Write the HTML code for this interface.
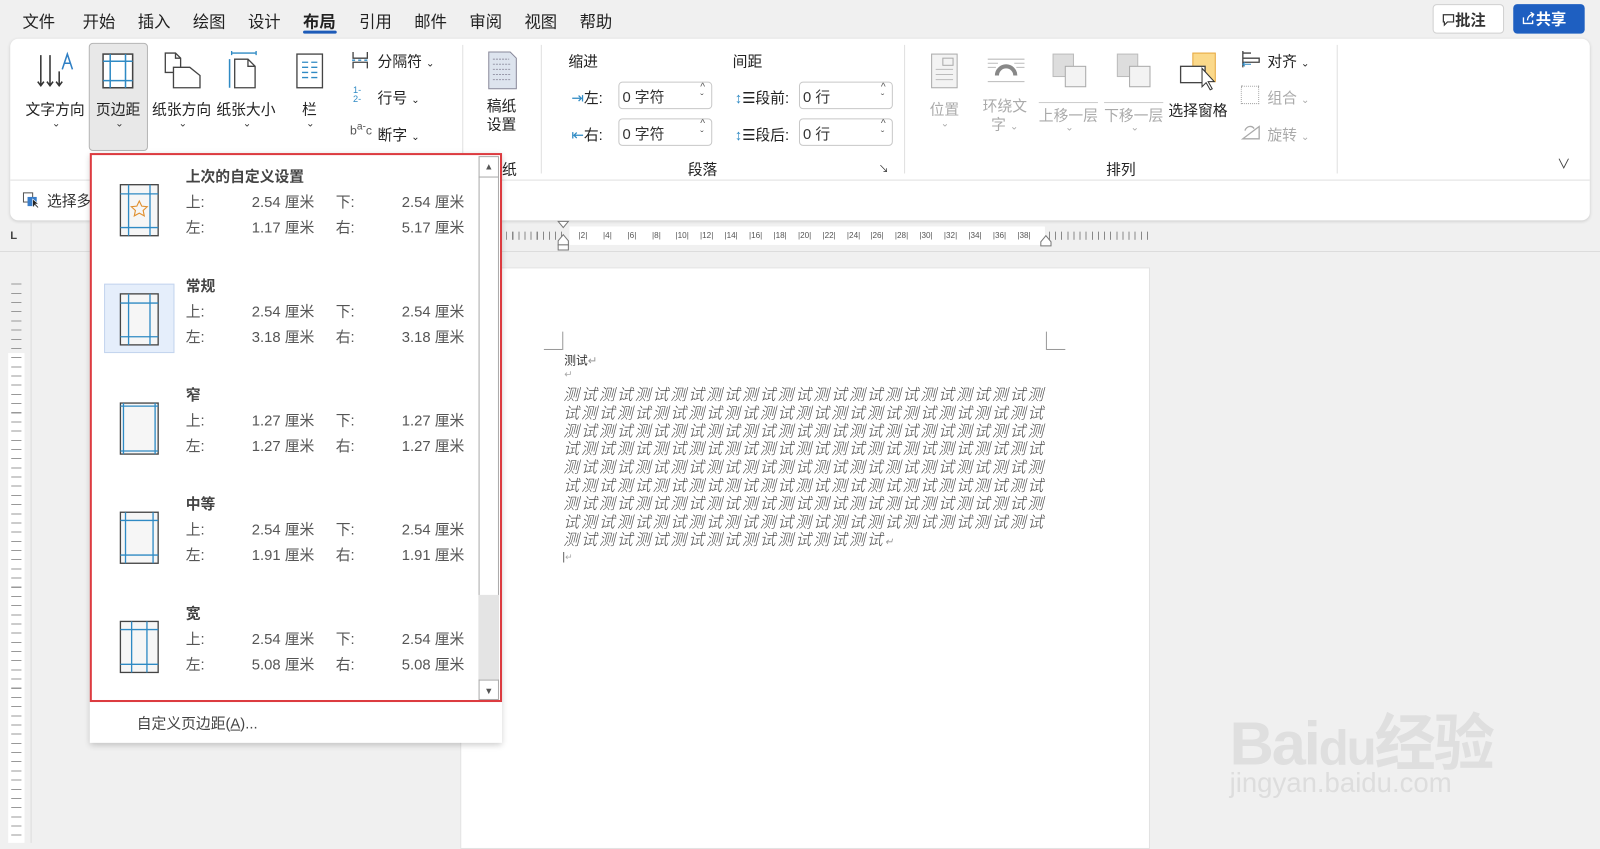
<!DOCTYPE html>
<html><head><meta charset="utf-8">
<style>
*{margin:0;padding:0;box-sizing:border-box}
html,body{width:1600px;height:843px;overflow:hidden;background:#f0f0f0}
body{font-family:"Liberation Sans","Noto Sans CJK SC",sans-serif;color:#333}
#w{position:absolute;left:0;top:0;width:1568px;height:826px;transform:scale(1.0204);transform-origin:0 0}
.a{position:absolute;white-space:nowrap}
.tab{position:absolute;top:8px;font-size:16px;color:#222}
.rl{font-size:14.5px;color:#222}
.g{color:#aaa}
.sp{position:absolute;width:92px;height:27px;border:1px solid #c8c8c8;border-radius:4px;background:#fff;font-size:14.5px;padding:3px 0 0 3px}
.sp i{position:absolute;right:6px;top:-1px;font-style:normal;font-size:10px;color:#555;line-height:11px}
.it{position:absolute;left:0;width:380px;height:100px}
.it .t{position:absolute;left:94px;top:0;font-size:14.5px;font-weight:bold;color:#444}
.it .r{position:absolute;font-size:14.5px;color:#555}
.doc{font-family:"Noto Sans CJK SC",sans-serif;font-style:italic;font-weight:300;font-size:15.5px;letter-spacing:2px;color:#4a4a4a;position:absolute;left:552px;line-height:17.8px}
.rn{position:absolute;top:226px;font-size:8px;color:#555}
</style></head><body><div id="w">

<div class="tab" style="left:22px">文件</div>
<div class="tab" style="left:81px">开始</div>
<div class="tab" style="left:135px">插入</div>
<div class="tab" style="left:189px">绘图</div>
<div class="tab" style="left:243px">设计</div>
<div class="tab" style="left:297px;font-weight:bold">布局</div>
<div class="a" style="left:297px;top:30px;width:33px;height:3px;background:#1d5bb8;border-radius:2px"></div>
<div class="tab" style="left:352px">引用</div>
<div class="tab" style="left:406px">邮件</div>
<div class="tab" style="left:460px">审阅</div>
<div class="tab" style="left:514px">视图</div>
<div class="tab" style="left:568px">帮助</div>

<div class="a" style="left:1404px;top:4px;width:70px;height:29px;background:#fff;border:1px solid #d0d0d0;border-radius:4px;font-size:15px;font-weight:bold;padding:4px 0 0 8px">
<svg width="13" height="13" style="vertical-align:-1px"><path d="M1.5 1.5h10v7h-6l-3 3v-3h-1z" fill="none" stroke="#333" stroke-width="1.2"/></svg>批注</div>
<div class="a" style="left:1483px;top:4px;width:70px;height:29px;background:#1e5fc1;border-radius:4px;font-size:15px;font-weight:bold;color:#fff;padding:4px 0 0 8px">
<svg width="14" height="14" style="vertical-align:-1px"><path d="M2 6v6h9V9M6 9c0-4 3-6 6-6M9 1l3 2-2 3" fill="none" stroke="#fff" stroke-width="1.3"/></svg>共享</div>

<div class="a" style="left:10px;top:38px;width:1548px;height:178px;background:#fff;border-radius:8px;box-shadow:0 1px 3px rgba(0,0,0,.15)"></div>
<div class="a" style="left:10px;top:176px;width:1548px;height:1px;background:#e0e0e0"></div>
<div class="a" style="left:22px;top:186px;font-size:14.5px"><svg width="20" height="18" style="vertical-align:-3px"><rect x="1" y="2" width="9" height="9" fill="none" stroke="#555"/><rect x="5" y="6" width="9" height="9" fill="#3a7dc9"/><path d="M10 8l0 9 2-3 3 3 1-1-3-3h3z" fill="#222" stroke="#fff" stroke-width=".6"/></svg> 选择多</div>

<div class="a" style="left:87px;top:42px;width:58px;height:106px;background:#e8e8e8;border:1px solid #b5b5b5;border-radius:4px"></div>
<svg class="a" style="left:36px;top:50px" width="38" height="40"><path d="M4 4v30M13 4v30M22 20v14M1 30l3 4 3-4M10 30l3 4 3-4M19 30l3 4 3-4" fill="none" stroke="#333" stroke-width="1.5"/><path d="M25 18l5-15 5 15M27 12h6" fill="none" stroke="#2f7fc4" stroke-width="1.5"/></svg>
<div class="a rl" style="left:25px;top:96px">文字方向</div><div class="a" style="left:51px;top:116px;font-size:10px">⌄</div>
<svg class="a" style="left:100px;top:52px" width="32" height="36"><rect x="1" y="1" width="29" height="33" fill="#fff" stroke="#444" stroke-width="1.5"/><path d="M8 1v33M23 1v33M1 8h29M1 27h29" stroke="#2f8ac4" stroke-width="1.5"/></svg>
<div class="a rl" style="left:94px;top:96px">页边距</div><div class="a" style="left:113px;top:116px;font-size:10px">⌄</div>
<svg class="a" style="left:160px;top:50px" width="40" height="38"><path d="M2 2h10l5 5v14H2z M12 2v5h5" fill="none" stroke="#444" stroke-width="1.3"/><path d="M10 16h16l10 8v12H10z" fill="#fff" stroke="#444" stroke-width="1.3"/></svg>
<div class="a rl" style="left:149px;top:96px">纸张方向</div><div class="a" style="left:175px;top:116px;font-size:10px">⌄</div>
<svg class="a" style="left:222px;top:50px" width="34" height="38"><path d="M5 2h24M5 0v4M29 0v4" stroke="#2f8ac4" stroke-width="1.3"/><path d="M3 8v28" stroke="#2f8ac4" stroke-width="1.5"/><path d="M8 8h13l7 7v21H8z M21 8v7h7" fill="none" stroke="#444" stroke-width="1.3"/></svg>
<div class="a rl" style="left:212px;top:96px">纸张大小</div><div class="a" style="left:238px;top:116px;font-size:10px">⌄</div>
<svg class="a" style="left:290px;top:52px" width="28" height="36"><rect x="1" y="1" width="25" height="33" fill="#fff" stroke="#444" stroke-width="1.3"/><path d="M6 9h6M15 9h6M6 14h6M15 14h6M6 19h6M15 19h6M6 24h6M15 24h6" stroke="#2f8ac4" stroke-width="1.3"/></svg>
<div class="a rl" style="left:296px;top:96px">栏</div><div class="a" style="left:300px;top:116px;font-size:10px">⌄</div>

<svg class="a" style="left:344px;top:50px" width="18" height="18"><path d="M2 1v6h14V1M2 17v-6h14v6" fill="none" stroke="#444" stroke-width="1.3"/><path d="M1 9h3M7 9h3M13 9h3" stroke="#2f8ac4" stroke-width="1.3"/></svg>
<div class="a rl" style="left:370px;top:49px">分隔符 <span style="font-size:10px">⌄</span></div>
<div class="a" style="left:346px;top:84px;font-size:9px;line-height:9px;color:#2f8ac4">1-<br>2-</div>
<div class="a rl" style="left:370px;top:85px">行号 <span style="font-size:10px">⌄</span></div>
<div class="a" style="left:343px;top:119px;font-size:12px;color:#555">b<span style="vertical-align:5px;font-size:10px">a-</span>c</div>
<div class="a rl" style="left:370px;top:121px">断字 <span style="font-size:10px">⌄</span></div>
<div class="a" style="left:453px;top:44px;width:1px;height:126px;background:#e0e0e0"></div>

<svg class="a" style="left:478px;top:50px" width="30" height="38"><path d="M1 1h21l6 6v30H1z" fill="#dde4ee" stroke="#889" stroke-width="1"/><path d="M5 8h16M5 13h18M5 18h18M5 23h18M5 28h18" stroke="#99a" stroke-dasharray="2 1"/></svg>
<div class="a rl" style="left:477px;top:96px;line-height:18px">稿纸<br>设置</div>
<div class="a rl" style="left:492px;top:155px">纸</div>
<div class="a" style="left:530px;top:44px;width:1px;height:126px;background:#e0e0e0"></div>

<div class="a rl" style="left:557px;top:49px">缩进</div>
<div class="a rl" style="left:718px;top:49px">间距</div>
<div class="a rl" style="left:560px;top:85px"><span style="color:#2f8ac4">⇥</span>左:</div>
<div class="a rl" style="left:560px;top:121px"><span style="color:#2f8ac4">⇤</span>右:</div>
<div class="sp" style="left:606px;top:80px">0 字符<i>^<br>ˇ</i></div>
<div class="sp" style="left:606px;top:116px">0 字符<i>^<br>ˇ</i></div>
<div class="a rl" style="left:720px;top:85px"><span style="color:#2f8ac4">↕</span>☰段前:</div>
<div class="a rl" style="left:720px;top:121px"><span style="color:#2f8ac4">↕</span>☰段后:</div>
<div class="sp" style="left:783px;top:80px">0 行<i>^<br>ˇ</i></div>
<div class="sp" style="left:783px;top:116px">0 行<i>^<br>ˇ</i></div>
<div class="a rl" style="left:674px;top:155px">段落</div>
<div class="a" style="left:861px;top:157px;font-size:10px">↘</div>
<div class="a" style="left:886px;top:44px;width:1px;height:126px;background:#e0e0e0"></div>

<svg class="a" style="left:912px;top:52px" width="28" height="36"><rect x="1" y="1" width="25" height="33" fill="#f3f3f3" stroke="#aaa"/><rect x="12" y="5" width="10" height="7" fill="none" stroke="#aaa"/><path d="M5 16h17M5 21h17M5 26h17" stroke="#bbb"/></svg>
<div class="a rl g" style="left:911px;top:96px">位置</div><div class="a g" style="left:922px;top:116px;font-size:10px">⌄</div>
<svg class="a" style="left:966px;top:56px" width="40" height="26"><path d="M2 2h36M2 6h10M28 6h10M2 10h8M30 10h8M2 24h36" stroke="#bbb"/><path d="M11 18a9 9 0 0 1 18 0" fill="none" stroke="#888" stroke-width="4"/></svg>
<div class="a rl g" style="left:963px;top:96px;line-height:18px;text-align:center">环绕文<br>字 <span style="font-size:10px">⌄</span></div>
<svg class="a" style="left:1030px;top:52px" width="36" height="36"><rect x="2" y="1" width="20" height="22" fill="#ddd" stroke="#bbb"/><rect x="14" y="13" width="20" height="20" fill="#f3f3f3" stroke="#aaa"/></svg>
<div class="a rl g" style="left:1018px;top:100px;border-top:1px solid #ccc;padding-top:1px">上移一层</div><div class="a g" style="left:1044px;top:120px;font-size:10px">⌄</div>
<svg class="a" style="left:1093px;top:52px" width="36" height="36"><rect x="2" y="1" width="20" height="22" fill="#ddd" stroke="#bbb"/><rect x="14" y="13" width="20" height="20" fill="#f3f3f3" stroke="#aaa"/></svg>
<div class="a rl g" style="left:1082px;top:100px;border-top:1px solid #ccc;padding-top:1px">下移一层</div><div class="a g" style="left:1108px;top:120px;font-size:10px">⌄</div>
<svg class="a" style="left:1155px;top:50px" width="40" height="40"><rect x="14" y="2" width="22" height="28" fill="#fbd98a" stroke="#e6a73c"/><rect x="2" y="15" width="24" height="16" fill="#fff" stroke="#444" stroke-width="1.3"/><path d="M23 17v18l4-4 4 7 2-1-4-7h6z" fill="#fff" stroke="#333"/></svg>
<div class="a rl" style="left:1145px;top:97px">选择窗格</div>
<svg class="a" style="left:1216px;top:49px" width="20" height="18"><path d="M2 1v16M2 3h8M2 8h16v4H2" fill="none" stroke="#444" stroke-width="1.3"/><path d="M2 14h8M4 12l-2 2 2 2" stroke="#2f8ac4" fill="none"/></svg>
<div class="a rl" style="left:1242px;top:49px">对齐 <span style="font-size:10px">⌄</span></div>
<div class="a" style="left:1216px;top:84px;width:18px;height:18px;border:1.5px dotted #aaa"></div>
<div class="a rl g" style="left:1242px;top:85px">组合 <span style="font-size:10px">⌄</span></div>
<svg class="a" style="left:1216px;top:120px" width="20" height="18"><path d="M2 16h16L18 4zM4 8c2-5 7-5 9-2" fill="none" stroke="#aaa" stroke-width="1.3"/></svg>
<div class="a rl g" style="left:1242px;top:121px">旋转 <span style="font-size:10px">⌄</span></div>
<div class="a rl" style="left:1084px;top:155px">排列</div>
<div class="a" style="left:1310px;top:44px;width:1px;height:126px;background:#e0e0e0"></div>
<div class="a" style="left:1526px;top:150px;font-size:13px;color:#444">∨</div>

<div class="a" style="left:10px;top:225px;font-size:11px;font-weight:bold;color:#444">L</div>
<div class="a" style="left:0;top:246px;width:1568px;height:1px;background:#dcdcdc"></div>
<div class="a" style="left:30px;top:218px;width:1px;height:608px;background:#dcdcdc"></div>
<div class="a" style="left:558px;top:222px;width:466px;height:18px;background:#fff"></div>
<div class="a" style="left:496px;top:227px;width:58px;height:8px;background:repeating-linear-gradient(90deg,#888 0 1px,transparent 1px 6px)"></div>
<div class="a" style="left:1028px;top:227px;width:100px;height:8px;background:repeating-linear-gradient(90deg,#888 0 1px,transparent 1px 6px)"></div>
<div class="rn" style="left:567px">|2|</div><div class="rn" style="left:591px">|4|</div><div class="rn" style="left:615px">|6|</div><div class="rn" style="left:639px">|8|</div><div class="rn" style="left:662px">|10|</div><div class="rn" style="left:686px">|12|</div><div class="rn" style="left:710px">|14|</div><div class="rn" style="left:734px">|16|</div><div class="rn" style="left:758px">|18|</div><div class="rn" style="left:782px">|20|</div><div class="rn" style="left:806px">|22|</div><div class="rn" style="left:830px">|24|</div><div class="rn" style="left:853px">|26|</div><div class="rn" style="left:877px">|28|</div><div class="rn" style="left:901px">|30|</div><div class="rn" style="left:925px">|32|</div><div class="rn" style="left:949px">|34|</div><div class="rn" style="left:973px">|36|</div><div class="rn" style="left:997px">|38|</div>
<svg class="a" style="left:546px;top:216px" width="12" height="30"><path d="M1 1h10l-5 6z" fill="#fff" stroke="#777"/><path d="M6 14l5 6v4H1v-4z" fill="#fff" stroke="#777"/><path d="M1 24h10v5H1z" fill="#fff" stroke="#777"/></svg>
<svg class="a" style="left:1019px;top:230px" width="12" height="12"><path d="M6 1l5 6v4H1V7z" fill="#fff" stroke="#777"/></svg>
<div class="a" style="left:8px;top:346px;width:16px;height:480px;background:#fff"></div>
<div class="a" style="left:11px;top:270px;width:10px;height:556px;background:repeating-linear-gradient(transparent 0 8px,#999 8px 9px)"></div>

<div class="a" style="left:451px;top:262px;width:676px;height:570px;background:#fff;border:1px solid #e2e2e2"></div>
<div class="a" style="left:551px;top:325px;width:1px;height:18px;background:#999"></div>
<div class="a" style="left:533px;top:342px;width:18px;height:1px;background:#999"></div>
<div class="a" style="left:1025px;top:325px;width:1px;height:18px;background:#999"></div>
<div class="a" style="left:1026px;top:342px;width:18px;height:1px;background:#999"></div>
<div class="a" style="left:553px;top:345px;font-size:11.5px;color:#333;font-family:'Noto Sans CJK SC',sans-serif">测试<span style="color:#999">↵</span></div>
<div class="a" style="left:553px;top:362px;font-size:10px;color:#aaa">↵</div>
<div class="doc" style="top:378px">测试测试测试测试测试测试测试测试测试测试测试测试测试测<br>试测试测试测试测试测试测试测试测试测试测试测试测试测试<br>测试测试测试测试测试测试测试测试测试测试测试测试测试测<br>试测试测试测试测试测试测试测试测试测试测试测试测试测试<br>测试测试测试测试测试测试测试测试测试测试测试测试测试测<br>试测试测试测试测试测试测试测试测试测试测试测试测试测试<br>测试测试测试测试测试测试测试测试测试测试测试测试测试测<br>试测试测试测试测试测试测试测试测试测试测试测试测试测试<br>测试测试测试测试测试测试测试测试测试<span style="color:#999;font-size:10px">↵</span></div>
<div class="a" style="left:551px;top:540px;font-size:11px;color:#555">|<span style="color:#aaa;font-size:9px">↵</span></div>

<div class="a" style="left:1205px;top:680px;font-size:60px;font-weight:bold;color:rgba(205,205,205,.5);letter-spacing:-2px">Bai<span style="font-size:48px">du</span>经验</div>
<div class="a" style="left:1205px;top:752px;font-size:27px;color:rgba(205,205,205,.55)">jingyan.baidu.com</div>

<div class="a" style="left:88px;top:150px;width:404px;height:578px;background:#fff;box-shadow:0 2px 6px rgba(0,0,0,.2)">
  <div class="a" style="left:381px;top:3px;width:20px;height:533px;border:1px solid #aaa;background:#fff"></div>
  <div class="a" style="left:381px;top:433px;width:20px;height:83px;background:#e4e4e4"></div>
  <div class="a" style="left:381px;top:3px;width:20px;height:21px;border-bottom:1px solid #aaa;font-size:9px;text-align:center;line-height:20px;color:#555">▲</div>
  <div class="a" style="left:381px;top:516px;width:20px;height:20px;border-top:1px solid #aaa;font-size:9px;text-align:center;line-height:20px;color:#555">▼</div>

  <div class="it" style="top:12px">
    <svg class="a" style="left:29px;top:18px" width="40" height="52"><rect x="1" y="1" width="37" height="50" fill="#f6f6f6" stroke="#444" stroke-width="1.3"/><path d="M9 1v50M30 1v50M1 10h37M1 43h37" stroke="#2f8ac4" stroke-width="1.3"/><path d="M19.5 17l2.4 5 5.4.6-4 3.7 1.1 5.3-4.9-2.7-4.9 2.7 1.1-5.3-4-3.7 5.4-.6z" fill="none" stroke="#e09030" stroke-width="1.1"/></svg>
    <div class="t">上次的自定义设置</div>
    <div class="r" style="left:94px;top:25px">上:</div><div class="r" style="left:150px;top:25px;width:70px;text-align:right">2.54 厘米</div>
    <div class="r" style="left:241px;top:25px">下:</div><div class="r" style="left:297px;top:25px;width:70px;text-align:right">2.54 厘米</div>
    <div class="r" style="left:94px;top:50px">左:</div><div class="r" style="left:150px;top:50px;width:70px;text-align:right">1.17 厘米</div>
    <div class="r" style="left:241px;top:50px">右:</div><div class="r" style="left:297px;top:50px;width:70px;text-align:right">5.17 厘米</div>
  </div>

  <div class="a" style="left:14px;top:128px;width:69px;height:68px;background:#e5eefb;border:1px solid #c3d4ee"></div>
  <div class="it" style="top:119px">
    <svg class="a" style="left:29px;top:18px" width="40" height="52"><rect x="1" y="1" width="37" height="50" fill="#f6f6f6" stroke="#444" stroke-width="1.3"/><path d="M9 1v50M30 1v50M1 10h37M1 43h37" stroke="#2f8ac4" stroke-width="1.3"/></svg>
    <div class="t">常规</div>
    <div class="r" style="left:94px;top:25px">上:</div><div class="r" style="left:150px;top:25px;width:70px;text-align:right">2.54 厘米</div>
    <div class="r" style="left:241px;top:25px">下:</div><div class="r" style="left:297px;top:25px;width:70px;text-align:right">2.54 厘米</div>
    <div class="r" style="left:94px;top:50px">左:</div><div class="r" style="left:150px;top:50px;width:70px;text-align:right">3.18 厘米</div>
    <div class="r" style="left:241px;top:50px">右:</div><div class="r" style="left:297px;top:50px;width:70px;text-align:right">3.18 厘米</div>
  </div>

  <div class="it" style="top:226px">
    <svg class="a" style="left:29px;top:18px" width="40" height="52"><rect x="1" y="1" width="37" height="50" fill="#f6f6f6" stroke="#444" stroke-width="1.3"/><path d="M4 1v50M35 1v50M1 4h37M1 48h37" stroke="#2f8ac4" stroke-width="1.3"/></svg>
    <div class="t">窄</div>
    <div class="r" style="left:94px;top:25px">上:</div><div class="r" style="left:150px;top:25px;width:70px;text-align:right">1.27 厘米</div>
    <div class="r" style="left:241px;top:25px">下:</div><div class="r" style="left:297px;top:25px;width:70px;text-align:right">1.27 厘米</div>
    <div class="r" style="left:94px;top:50px">左:</div><div class="r" style="left:150px;top:50px;width:70px;text-align:right">1.27 厘米</div>
    <div class="r" style="left:241px;top:50px">右:</div><div class="r" style="left:297px;top:50px;width:70px;text-align:right">1.27 厘米</div>
  </div>

  <div class="it" style="top:333px">
    <svg class="a" style="left:29px;top:18px" width="40" height="52"><rect x="1" y="1" width="37" height="50" fill="#f6f6f6" stroke="#444" stroke-width="1.3"/><path d="M6 1v50M33 1v50M1 9h37M1 43h37" stroke="#2f8ac4" stroke-width="1.3"/></svg>
    <div class="t">中等</div>
    <div class="r" style="left:94px;top:25px">上:</div><div class="r" style="left:150px;top:25px;width:70px;text-align:right">2.54 厘米</div>
    <div class="r" style="left:241px;top:25px">下:</div><div class="r" style="left:297px;top:25px;width:70px;text-align:right">2.54 厘米</div>
    <div class="r" style="left:94px;top:50px">左:</div><div class="r" style="left:150px;top:50px;width:70px;text-align:right">1.91 厘米</div>
    <div class="r" style="left:241px;top:50px">右:</div><div class="r" style="left:297px;top:50px;width:70px;text-align:right">1.91 厘米</div>
  </div>

  <div class="it" style="top:440px">
    <svg class="a" style="left:29px;top:18px" width="40" height="52"><rect x="1" y="1" width="37" height="50" fill="#f6f6f6" stroke="#444" stroke-width="1.3"/><path d="M12 1v50M27 1v50M1 9h37M1 43h37" stroke="#2f8ac4" stroke-width="1.3"/></svg>
    <div class="t">宽</div>
    <div class="r" style="left:94px;top:25px">上:</div><div class="r" style="left:150px;top:25px;width:70px;text-align:right">2.54 厘米</div>
    <div class="r" style="left:241px;top:25px">下:</div><div class="r" style="left:297px;top:25px;width:70px;text-align:right">2.54 厘米</div>
    <div class="r" style="left:94px;top:50px">左:</div><div class="r" style="left:150px;top:50px;width:70px;text-align:right">5.08 厘米</div>
    <div class="r" style="left:241px;top:50px">右:</div><div class="r" style="left:297px;top:50px;width:70px;text-align:right">5.08 厘米</div>
  </div>

  <div class="a" style="left:0;top:0;width:404px;height:538px;border:2px solid #dc3b40"></div>
  <div class="a" style="left:46px;top:548px;font-size:14.5px;color:#444">自定义页边距(<u>A</u>)...</div>
</div>

</div></body></html>
